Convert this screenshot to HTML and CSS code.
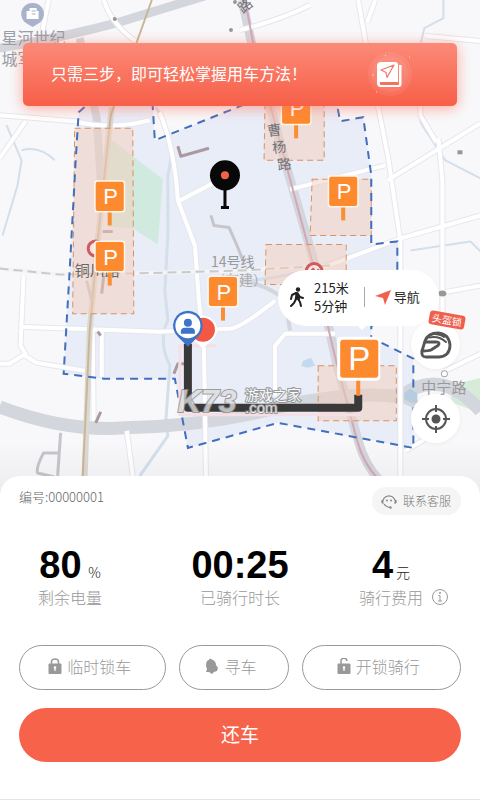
FILE: index.html
```html
<!DOCTYPE html>
<html lang="zh-CN">
<head>
<meta charset="utf-8">
<meta name="viewport" content="width=device-width, initial-scale=1">
<title>骑行中</title>
<link rel="stylesheet" href="styles.css">
</head>
<body>
<main class="app">
  <section class="map" aria-label="地图">
    <svg class="map-canvas" viewBox="0 0 480 495" preserveAspectRatio="xMidYMin slice">
      <defs>
        <g id="pin">
          <path d="M0 14V29" stroke="#f98e33" stroke-width="4"/>
          <rect x="-15.500" y="-16" width="31" height="32" rx="3" fill="#fff6e8"/>
          <rect x="-14" y="-14.500" width="28" height="29" rx="2" fill="#fd8a2f"/>
        </g>
        <linearGradient id="fade" x1="0" y1="0" x2="0" y2="1">
          <stop offset="0" stop-color="#000" stop-opacity="0"/>
          <stop offset="1" stop-color="#000" stop-opacity=".05"/>
        </linearGradient>
      </defs>
      <rect width="480" height="495" fill="#f8f8fa"/>

      <!-- service area -->
      <path class="area" d="M150 60L155 140L330 70L340 121L363 117L371 175V244L397 241V300L371 326V337L413 358V447L278 422L188 447L175 378H105L64 373L70 270L79 112Z"/>

      <!-- parks and water -->
      <path d="M106 135L163 179L158 244L133 228L108 226Z" fill="#d0eadf"/>
      <path d="M448 385L480 377V412L452 402Z" fill="#d6ecd9"/>
      <path d="M303 360l8-3 4 8-8 2-6-2z" fill="#c4d9ee"/>
      <g class="line" stroke="#d3dfeb">
        <path stroke-width="2" d="M7 125L22 160L18 185L3 235M22 150Q40 145 55 160M422 95Q414 115 425 130L445 160L480 178M410 250L470 241L480 251M443 0V18L424 28L420 45"/>
        <path stroke-width="3" d="M156 107Q178 140 168 175V235L165 290L168 320Q158 340 170 365L166 420L168 435L140 475M250 280Q300 275 340 258L400 240"/>
      </g>

      <!-- grey main roads -->
      <g class="line" stroke="#d3d6dc">
        <path stroke-width="9" d="M0 48Q60 38 120 22Q165 8 205-4"/>
        <path stroke-width="8" d="M80 38L97 118L101 180"/>
        <path stroke-width="13" d="M0 406Q65 431 125 427Q210 425 285 405Q350 390 400 396Q440 365 480 410"/>
        <path stroke-width="9" d="M400 396L418 405M242 0L252 45L270 105L286 165L315 265L337 365L358 440Q365 465 380 480"/>
        <path stroke-width="4" d="M240 280Q270 285 285 300L290 330"/>
      </g>

      <!-- local streets: casing, then white surface -->
      <g class="line" stroke="#e5e7ed" stroke-width="6">
        <path d="M49 0L43 30M104 0Q112 25 137 42M0 115L75 121Q110 130 150 120M0 158L26 121M160 112Q175 150 178 200L195 245L199 300L204 345L206 475M180 200L230 174M24 275L21 345L26 353L10 363H0M24 354L37 362L85 370M20 326L160 331L230 328Q240 328 275 300M127 430L133 475M102 330V376M93 330L94 420M275 395V345L285 333H335M358 0L365 40L388 158L400 240V475M387 180L480 123M290 189L385 165M315 270L400 238L480 215M438 138L442 180V350M375 0L367 22M240 30Q280 20 310 5M425 36L480 41M436 142L420 115V80M445 370L480 353M405 450L430 435M442 292L480 285"/>
      </g>
      <path class="line" stroke="#fff" stroke-width="4" d="M49 0L43 30M104 0Q112 25 137 42M0 115L75 121Q110 130 150 120M0 158L26 121M160 112Q175 150 178 200L195 245L199 300L204 345L206 475M180 200L230 174M24 275L21 345L26 353L10 363H0M24 354L37 362L85 370M20 326L160 331L230 328Q240 328 275 300M127 430L133 475M102 330V376M93 330L94 420M275 395V345L285 333H335M358 0L365 40L388 158L400 240V475M387 180L480 123M290 189L385 165M315 270L400 238L480 215M438 138L442 180V350M375 0L367 22M240 30Q280 20 310 5M425 36L480 41M436 142L420 115V80M445 370L480 353M405 450L430 435M442 292L480 285"/>

      <!-- railway -->
      <path class="line" stroke="#f4f4f6" stroke-width="4" d="M0 268L60 274L130 273L240 270L330 265"/>
      <path class="line" stroke="#c9cacc" stroke-width="2" stroke-dasharray="9 5" d="M0 268L60 274L130 273L240 270L330 265"/>

      <!-- metro lines -->
      <g class="line">
        <path stroke="#ddd8d3" stroke-width="6" d="M112 107L98 240L90 330L85 475"/>
        <path stroke="#c9b898" stroke-width="2" d="M152 0L111 115L98 240L90 330L83 475"/>
        <path stroke="#d5a6b4" stroke-width="2" d="M245 0L253 42L271 108L287 168L314 268L337 365L357 440Q363 462 377 477"/>
        <path stroke="#c6c5cb" stroke-width="3" d="M61 432L58 475M60 452H44Q36 467 38 472L55 476M211 215L214 225L229 227L237 245L243 260M87 280L92 300"/>
        <path stroke="#aa999e" stroke-width="3" d="M178 146L181 156L209 148M103 231h10M104 275L102 293M101 411L96 422M98 331l3 4M174 373l4-10h8"/>
      </g>

      <!-- parking zones -->
      <path class="zone" d="M75 128H133L134 313H73Z"/>
      <path class="zone" d="M265 100H324V160H264Z"/>
      <path class="zone" d="M312 179H371V235H310Z"/>
      <path class="zone" d="M266 244H346V284H265Z"/>
      <path class="zone" d="M318 365H396V420H318Z"/>

      <path class="boundary" d="M150 60L155 140L330 70L340 121L363 117L371 175V244L397 241V300L371 326V337L413 358V447L278 422L188 447L175 378H105L64 373L70 270L76 160L79 112L88 104Z"/>

      <!-- point of interest and stations -->
      <path d="M33 3a11 11 0 0 1 5 21l-5 3-5-3a11 11 0 0 1 5-21z" fill="#a9b2cb"/>
      <path d="M27 19V11h3V8h7v3h2v8z" fill="#fff"/>
      <path d="M32 11h4M32 14h4" stroke="#a9b2cb"/>
      <g fill="#f7e5e4" stroke="#cf5b60" stroke-width="3">
        <circle cx="96" cy="248" r="7.500"/><circle cx="314" cy="271" r="8"/>
      </g>
      <path d="M309 273l5-5M315 274l4-5" stroke="#cf5b60" stroke-width="3"/>
      <g fill="#9d9696">
        <circle cx="115" cy="19" r="2"/><circle cx="231" cy="30" r="2"/><circle cx="235" cy="2" r="2"/>
        <rect x="457" y="150" width="5" height="4"/><ellipse cx="442" cy="293" rx="4" ry="3"/>
      </g>
      <circle cx="444" cy="373" r="3" fill="#fff" stroke="#aaa"/>
      <path d="M404 398v-6l6-4 7 5v9h-7z" fill="#b6cce0"/>

      <g class="label">
        <text x="2" y="44" fill="#999da7">星河世纪</text>
        <text x="2" y="65" fill="#999da7">城军</text>
        <text x="75" y="275" font-size="15" fill="#666">铜川路</text>
        <text x="211" y="266" font-size="14" fill="#999">14号线</text>
        <text x="211" y="284" font-size="14" fill="#aaa">（在建）</text>
        <text x="421" y="392" font-size="15" fill="#999">中宁路</text>
        <g fill="#70737b" font-size="14">
          <text transform="translate(268 136) rotate(-8)">曹</text>
          <text transform="translate(273 153) rotate(-8)">杨</text>
          <text transform="translate(278 170) rotate(-8)">路</text>
          <text transform="translate(243 14) rotate(-40)">路</text>
        </g>
      </g>

      <!-- walking route -->
      <path d="M180 345H216M180 345V414H360" fill="none" stroke="#f5dfe4" stroke-width="3"/>
      <path d="M188 343V407H358V394" fill="none" stroke="#393939" stroke-width="8" stroke-linejoin="round"/>

      <!-- parking pins -->
      <g class="pin-text">
        <use href="#pin" x="296" y="109"/><text x="297" y="116">P</text>
        <use href="#pin" x="110" y="196"/><text x="111" y="204">P</text>
        <use href="#pin" x="110" y="256"/><text x="111" y="264">P</text>
        <use href="#pin" x="343" y="191"/><text x="344" y="199">P</text>
        <use href="#pin" x="223" y="291"/><text x="224" y="299">P</text>
        <path d="M358 378V395" stroke="#fd8a2f" stroke-width="4"/>
        <rect x="337" y="336" width="43" height="44" rx="4" fill="#fff"/>
        <rect x="340" y="339" width="38" height="38" rx="3" fill="#fd8a2f"/>
        <text class="large" x="359" y="369">P</text>
      </g>

      <!-- bike, destination and rider -->
      <path d="M225 175V207M221 207H229" stroke="#080808" stroke-width="3"/>
      <circle cx="225" cy="175" r="15" fill="#080808"/><circle cx="225" cy="175" r="4" fill="#f46149"/>
      <path d="M195 340L203 348L211 340Z" fill="#fff"/>
      <circle cx="203" cy="329" r="13" fill="#f25843" stroke="#fff" stroke-width="2"/>
      <path d="M188 310a15 15 0 0 1 10 26l-10 10-10-10a15 15 0 0 1 10-26z" fill="#3d73c9"/>
      <circle cx="188" cy="325" r="12.500" fill="#fff"/>
      <circle cx="188" cy="322" r="4" fill="#3d73c9"/>
      <path d="M181 333v-2q0-4 4-4h6q4 0 4 4v2z" fill="#3d73c9"/>

      <g class="watermark">
        <text class="brand" x="178" y="411">K73</text>
        <text x="245" y="399" font-size="14">游戏之家</text>
        <text class="domain" x="245" y="412">.com</text>
      </g>
      <rect y="440" width="480" height="55" fill="url(#fade)"/>
    </svg>

    <a class="banner" href="#guide">
      <span>只需三步，即可轻松掌握用车方法！</span>
      <svg class="guide-icon" viewBox="0 0 44 44" aria-hidden="true">
        <circle cx="22" cy="22" r="22" fill="#fff" opacity=".07"/>
        <circle cx="22" cy="22" r="18" fill="#fff" opacity=".06"/>
        <path d="M13 10h14a3 3 0 0 1 3 3v17H14q-2 0-2 1.500t2 1.500h17V13h2.500v19q0 3-3 3H13q-4 0-4-4V14q0-4 4-4z" fill="#fff"/>
        <path d="M12 30h18v3H14q-2 0-2-1.500z" fill="#f8705b"/>
        <path d="M26 13L13 18l5 2.500 1 5z" fill="none" stroke="#f47663" stroke-width="1.200" stroke-linejoin="round"/>
        <path d="M17 3l1 1M4 23h2M41 5h1M8 40h1" stroke="#ffd2c8"/>
      </svg>
    </a>

    <div class="bubble">
      <svg class="walk-icon" viewBox="0 0 14 20" aria-hidden="true">
        <circle cx="8" cy="2.500" r="2.200" fill="#222"/>
        <path d="M7 6L5.500 13M8 7l1 6M6 6L2 8 1 12M8 7l2 3 3 1M6 12l-2 4-3 3M8 12l2 3 1 4" fill="none" stroke="#222" stroke-width="2" stroke-linecap="round" stroke-linejoin="round"/>
        <path d="M5.500 5.500h3l1 7h-4z" fill="#222"/>
      </svg>
      <p class="distance">215米<br>5分钟</p>
      <button class="navigate" type="button">
        <svg viewBox="0 0 16 16" aria-hidden="true"><path d="M16 1L0 7l8 2 2 7z" fill="#f1604d"/></svg>
        导航
      </button>
    </div>

    <div class="tools">
      <button class="tool" type="button" aria-label="头盔锁">
        <svg viewBox="0 0 32 28" aria-hidden="true">
          <g fill="none" stroke="#555" stroke-width="2.800" stroke-linecap="round" stroke-linejoin="round">
            <path d="M2 20Q1 26 6 26H19Q30 25 30 14Q29 3 18 2Q8 2 5 10Z"/>
            <path d="M5 11H16Q21 11 18 14.500L11 19Q9 20 2 20"/>
            <path d="M9 6.500Q19 4.500 26 11M14 3Q20 3 24 6" stroke-width="2"/>
          </g>
        </svg>
        <span class="badge">头盔锁</span>
      </button>
      <button class="tool" type="button" aria-label="定位">
        <svg viewBox="0 0 28 28" aria-hidden="true">
          <g fill="none" stroke="#555" stroke-width="2"><circle cx="14" cy="14" r="10"/><path d="M14 0V7M14 21V28M0 14H7M21 14H28"/></g>
          <circle cx="14" cy="14" r="4.500" fill="#555"/>
        </svg>
      </button>
    </div>
  </section>

  <section class="panel">
    <header class="panel-head">
      <span>编号:00000001</span>
      <button class="service" type="button">
        <svg viewBox="0 0 16 16" aria-hidden="true">
          <path d="M2 11A6.300 6.300 0 1 1 14 11M3 11q2 3 6 3.500M1 7v3M15 7v3" fill="none" stroke="#888" stroke-width="1.200"/>
          <circle cx="6" cy="7.500" r="1" fill="#888"/><circle cx="10" cy="7.500" r="1" fill="#888"/><circle cx="9.500" cy="14.500" r="1.200" fill="#888"/>
        </svg>
        联系客服
      </button>
    </header>

    <dl class="stats">
      <div class="stat">
        <dd><strong>80</strong> <small>%</small></dd>
        <dt>剩余电量</dt>
      </div>
      <div class="stat">
        <dd><strong>00:25</strong></dd>
        <dt>已骑行时长</dt>
      </div>
      <div class="stat with-info">
        <dd><strong>4</strong><small>元</small></dd>
        <dt>骑行费用</dt>
        <dd class="info">
          <svg viewBox="0 0 16 16" role="img" aria-label="费用说明"><circle cx="8" cy="8" r="7.500" fill="none" stroke="#999"/><path d="M6.500 6.500H8V12M6 12h4" fill="none" stroke="#999"/><circle cx="8" cy="4" r="1" fill="#999"/></svg>
        </dd>
      </div>
    </dl>

    <div class="actions">
      <button type="button">
        <svg viewBox="0 0 14 16" aria-hidden="true"><path d="M3.500 6V4a3.500 3 0 0 1 7 0v2" fill="none" stroke="#999" stroke-width="1.500"/><rect x=".5" y="5.500" width="13" height="10.500" rx="1" fill="#999"/><path d="M7 9v4" stroke="#fff" stroke-width="1.200"/><circle cx="7" cy="9.500" r="1.300" fill="#fff"/></svg>
        临时锁车
      </button>
      <button type="button">
        <svg viewBox="0 0 14 16" aria-hidden="true"><path d="M2 3Q4 2 5 .5L7 1.500Q11 3 11 7l2 3-1 3-3 1-2 2-3-2H1l1-3Q0 7 2 3z" fill="#999"/></svg>
        寻车
      </button>
      <button type="button">
        <svg viewBox="0 0 14 16" aria-hidden="true"><path d="M4 6V3.500a3 3 0 0 1 6-.5" fill="none" stroke="#999" stroke-width="1.500"/><rect x=".5" y="5.500" width="13" height="10.500" rx="1" fill="#999"/><path d="M7 9v4" stroke="#fff" stroke-width="1.200"/><circle cx="7" cy="9.500" r="1.300" fill="#fff"/></svg>
        开锁骑行
      </button>
    </div>
    <button class="return" type="button">还车</button>
  </section>
</main>
</body>
</html>
```
FILE: styles.css
```css
* { box-sizing: border-box; }

body,
p,
dl,
dd { margin: 0; }

body {
  font-family: "Noto Sans CJK SC", sans-serif;
  font-weight: 300;
  color: #666;
  background: #fff;
}

button {
  padding: 0;
  border: 0;
  background: none;
  font: inherit;
  color: inherit;
  cursor: pointer;
}

.app {
  display: flex;
  flex-direction: column;
  min-height: 100vh;
}

/* Map */
.map {
  position: relative;
  flex: 1;
  min-height: 480px;
  margin-bottom: -20px;
  padding: 43px 23px 0;
  overflow: hidden;
}

.map-canvas {
  position: absolute;
  inset: 0;
  width: 100%;
  height: 100%;
}

.line { fill: none; stroke-linejoin: round; }
.area { fill: #e9edf8; }
.boundary { fill: none; stroke: #426fbd; stroke-width: 2; stroke-dasharray: 8 6; }
.zone { fill: #f4cdb9; fill-opacity: .5; stroke: #dc9060; stroke-width: 1; stroke-dasharray: 6 4; }
.label { font-size: 16px; font-weight: 400; }

.pin-text text {
  font-family: "Liberation Sans", sans-serif;
  font-size: 22px;
  font-weight: 400;
  text-anchor: middle;
  fill: #fff;
}

.pin-text .large { font-size: 33px; }

.watermark {
  fill: #fff;
  stroke: #888;
  stroke-width: 2;
  paint-order: stroke;
  font-weight: 400;
  opacity: .8;
}

.watermark .brand {
  font-family: "Liberation Sans", sans-serif;
  font-size: 32px;
  font-style: italic;
  font-weight: 700;
  fill: #ddd;
}

.watermark .domain {
  font-family: "Liberation Sans", sans-serif;
  font-size: 15px;
}

.banner {
  position: relative;
  display: flex;
  align-items: center;
  justify-content: space-between;
  padding: 9px 45px 10px 28px;
  border-radius: 5px;
  background: linear-gradient(#fb8a78, #f75f48);
  box-shadow: 0 2px 14px #ff6f5999;
  color: #fff;
  font-size: 16px;
  font-weight: 400;
  line-height: 24px;
  text-decoration: none;
}

.banner span { padding-bottom: 2px; }

.guide-icon { width: 44px; height: 44px; }

.bubble {
  position: absolute;
  top: 270px;
  left: 278px;
  display: flex;
  align-items: center;
  padding: 9px 19px 11px 12px;
  border-radius: 28px;
  background: #fff;
  color: #222;
  font-size: 13px;
  font-weight: 400;
  line-height: 18px;
}

.bubble::after {
  content: "";
  position: absolute;
  top: 100%;
  left: 50%;
  border: 4px solid transparent;
  border-top-color: #fff;
  border-bottom: 0;
}

.walk-icon { width: 14px; height: 20px; margin-right: 10px; }

.distance {
  margin-right: 15px;
  white-space: nowrap;
}

.navigate {
  display: flex;
  align-items: center;
  gap: 3px;
  padding-left: 10px;
  border-left: 1px solid #aaa;
  line-height: 20px;
  white-space: nowrap;
}

.navigate svg { width: 16px; height: 16px; }

.tools {
  position: absolute;
  top: 320px;
  right: 20px;
  display: grid;
  gap: 25px;
}

.tool {
  position: relative;
  display: grid;
  place-items: center;
  width: 49px;
  height: 49px;
  border-radius: 50%;
  background: #fff;
  box-shadow: 0 1px 4px #0000000d;
}

.tool svg { width: 32px; height: 28px; }

.badge {
  position: absolute;
  top: -7px;
  right: -5px;
  padding: 0 3px;
  border-radius: 3px;
  background: #ee604e;
  color: #fff;
  font-size: 10px;
  font-weight: 400;
  line-height: 14px;
  white-space: nowrap;
  transform: rotate(10deg);
}

/* Ride panel */
.panel {
  position: relative;
  padding: 11px 19px 37px;
  border-bottom: 1px solid #e4e4e4;
  border-radius: 20px 20px 0 0;
  background: #fff;
}

.panel-head {
  display: flex;
  justify-content: space-between;
  font-size: 13px;
  line-height: 20px;
}

.service {
  display: flex;
  align-items: center;
  gap: 6px;
  height: 28px;
  padding: 0 10px 0 9px;
  border-radius: 14px;
  background: #f5f5f5;
  color: #777;
  font-size: 12px;
}

.service svg { width: 16px; height: 16px; }

.stats {
  display: grid;
  grid-template-columns: repeat(3, 1fr);
  margin: 30px 0 36px;
}

.stat {
  justify-self: center;
  text-align: center;
  color: #999;
  font-size: 16px;
  line-height: 24px;
}

.stat:first-child { justify-self: start; padding-left: 19px; }
.stat:last-child { justify-self: end; padding-right: 13px; }

.stat dd {
  height: 40px;
  line-height: 40px;
  color: #222;
  white-space: nowrap;
}

.stat strong {
  font-family: "Liberation Sans", sans-serif;
  font-size: 38px;
  font-weight: 700;
  color: #000;
}

.stat small { font-size: 14px; }
.stat strong + small { margin-left: 3px; }

.with-info {
  display: grid;
  grid-template-columns: auto 16px;
  column-gap: 9px;
}

.with-info dt { grid-row: 2; }

.with-info .info {
  display: flex;
  align-items: center;
  grid-row: 2;
  grid-column: 2;
  height: 24px;
}

.info svg { width: 16px; height: 16px; }

.actions {
  display: grid;
  grid-template-columns: 147fr 109fr 159fr;
  gap: 13px;
  margin-bottom: 18px;
}

.actions button {
  display: flex;
  align-items: center;
  justify-content: center;
  gap: 5px;
  height: 45px;
  padding: 0 6px 3px 0;
  border: 1px solid #999;
  border-radius: 23px;
  color: #999;
  font-size: 16px;
}

.actions svg { width: 14px; height: 16px; }

.return {
  display: block;
  width: 100%;
  height: 54px;
  padding-bottom: 3px;
  border-radius: 27px;
  background: #f7624a;
  color: #fff;
  font-size: 19px;
  font-weight: 400;
}
```
